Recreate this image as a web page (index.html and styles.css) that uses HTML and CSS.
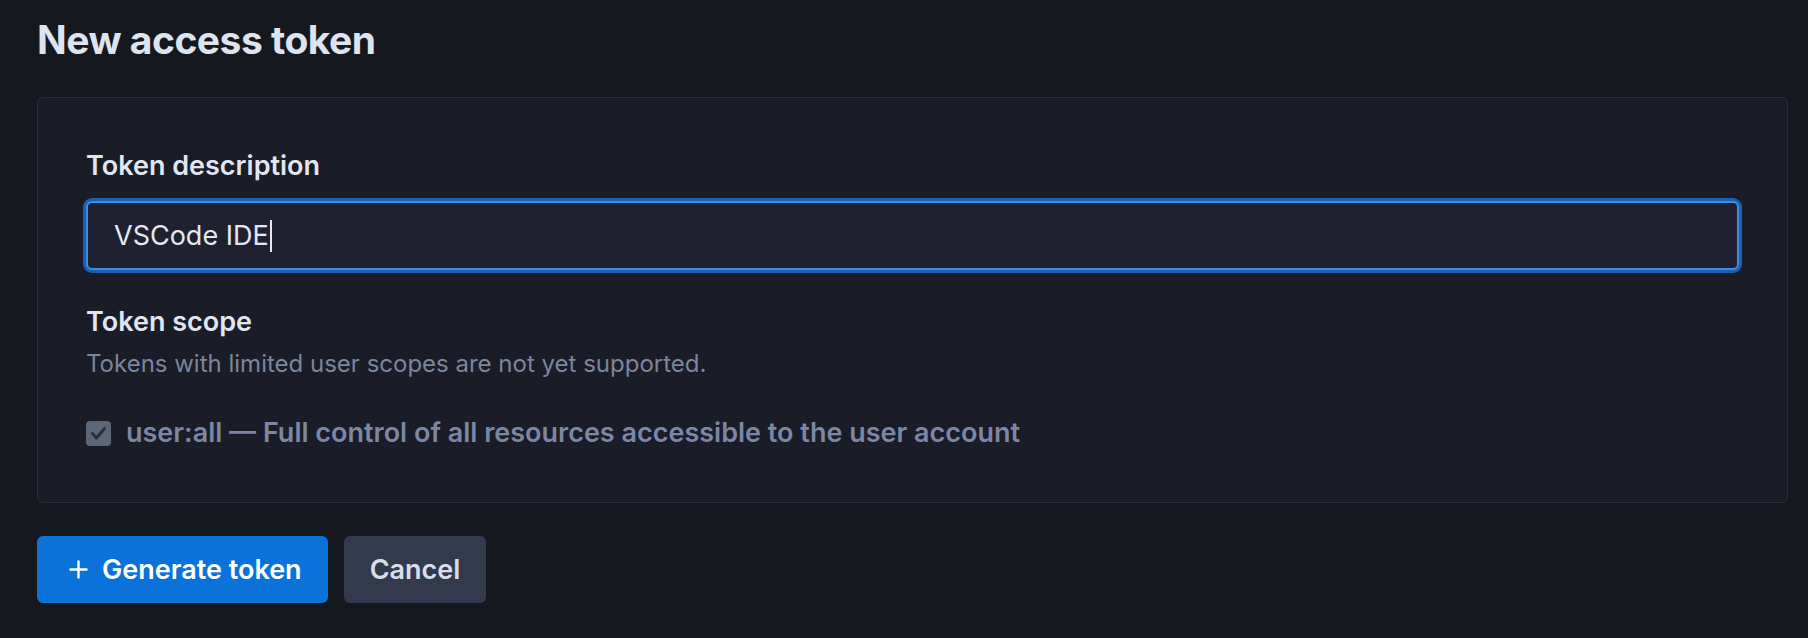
FILE: index.html
```html
<!DOCTYPE html>
<html lang="en">
<head>
<meta charset="utf-8">
<title>New access token</title>
<link rel="stylesheet" href="styles.css">
</head>
<body>
  <main class="page">
    <h1 class="title">New access token</h1>
    <form class="card">
      <label class="field-label" for="desc">Token description</label>
      <div class="input"><span class="input-text">VSCode IDE</span><span class="caret"></span></div>

      <div class="scope-title">Token scope</div>
      <p class="scope-note">Tokens with limited user scopes are not yet supported.</p>

      <div class="check-row">
        <span class="checkbox">
          <svg viewBox="0 0 25 25" width="25" height="25"><polyline points="6.5,12.5 10.5,17 18.5,7.5" fill="none" stroke="#2b303f" stroke-width="3" stroke-linecap="round" stroke-linejoin="round"/></svg>
        </span>
        <span class="check-label">user:all — Full control of all resources accessible to the user account</span>
      </div>
    </form>
    <div class="actions">
      <button class="btn btn-primary" type="button">
        <svg class="plus" viewBox="0 0 19 19" width="19" height="19"><path d="M9.5 1.5v16M1.5 9.5h16" stroke="#ffffff" stroke-width="2.4" stroke-linecap="round"/></svg>
        <span>Generate token</span>
      </button>
      <button class="btn btn-secondary" type="button">Cancel</button>
    </div>
  </main>
</body>
</html>
```

FILE: styles.css
```css
* { box-sizing: border-box; }

html, body {
  margin: 0;
  background: #161820;
}

body {
  font-family: Inter, "Noto Sans", "Liberation Sans", sans-serif;
  color: #dfe5f0;
}

.page {
  padding: 16px 20px 0 37px;
}

.title {
  margin: 0;
  font-size: 39px;
  line-height: 48px;
  font-weight: 700;
  color: #dde3ef;
  letter-spacing: -0.5px;
}

.card {
  margin-top: 33px;
  background: #1a1c27;
  border: 1px solid #2a2e3b;
  border-radius: 6px;
  padding: 50px 48px 56px 48px;
  display: flex;
  flex-direction: column;
}

.field-label {
  font-size: 27px;
  line-height: 36px;
  font-weight: 600;
  color: #e0e6f2;
}

.input {
  margin-top: 17px;
  height: 69px;
  background: #1f2130;
  border: 2px solid #3a8ee8;
  border-radius: 6px;
  box-shadow: 0 0 0 3px #1a5fb0;
  display: flex;
  align-items: center;
  padding-left: 26px;
  font-size: 27px;
  color: #e3e8f2;
}

.caret {
  width: 2px;
  height: 32px;
  background: #e3e8f2;
  margin-left: 1px;
}

.scope-title {
  margin-top: 35px;
  font-size: 27px;
  line-height: 34px;
  font-weight: 600;
  color: #e0e6f2;
}

.scope-note {
  margin: 10px 0 0;
  font-size: 24px;
  line-height: 30px;
  color: #7a859e;
}

.check-row {
  margin-top: 41px;
  display: flex;
  align-items: center;
  gap: 15px;
  height: 26px;
}

.checkbox {
  width: 25px;
  height: 25px;
  border-radius: 4px;
  background: #5d6579;
  display: flex;
}

.check-label {
  font-size: 27px;
  font-weight: 600;
  color: #7b87a5;
  line-height: 26px;
}

.actions {
  margin-top: 33px;
  display: flex;
  gap: 16px;
}

.btn {
  height: 67px;
  border: none;
  border-radius: 6px;
  font-family: inherit;
  font-size: 27px;
  font-weight: 600;
  display: flex;
  align-items: center;
  cursor: pointer;
}

.btn-primary {
  background: #0b72d9;
  color: #ffffff;
  padding: 0 26px 0 32px;
  gap: 14px;
}

.btn-secondary {
  background: #333a4d;
  color: #d8dfec;
  padding: 0 26px;
}
```
